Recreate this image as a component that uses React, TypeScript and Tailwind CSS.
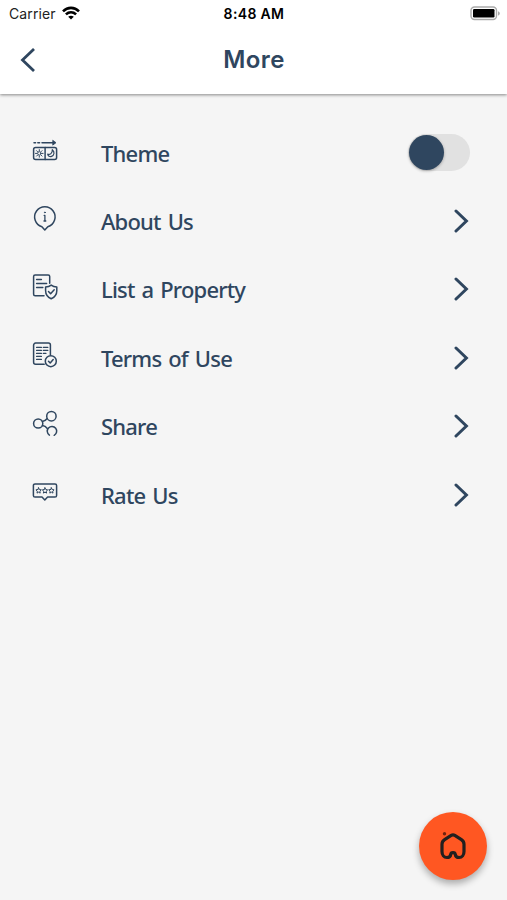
import React, { useState } from 'react';

interface MenuItem {
  id: string;
  label: string;
  icon: React.ReactNode;
}

const MENU_ITEMS: MenuItem[] = [
  {
    id: 'theme',
    label: 'Theme',
    icon: (
      <>
        <path d="M3 6.7h1.6M6.8 6.7h1.8M11 6.7h12" />
        <path d="M22 4.5l3 2.2-3 2.2z" fill="currentColor" strokeWidth="0.8" />
        <rect x="2.6" y="11.6" width="23" height="11.8" rx="2" />
        <path d="M14.1 11.6v11.8" />
        <circle cx="8.3" cy="17.4" r="1.7" strokeWidth="1" />
        <path d="M8.3 13.6v1.3M8.3 19.9v1.3M4.5 17.4h1.3M10.8 17.4h1.3M5.6 14.7l.9.9M10.1 19.2l.9.9M11 14.7l-.9.9M6.5 19.2l-.9.9" strokeWidth="1" />
        <path d="M21.3 13.7c2.7 2.1 2 5.7-.8 6.7-1.8.6-3.5-.5-3.8-2.2 2.2.9 4.9-1 4.6-4.5z" strokeWidth="1.2" />
      </>
    ),
  },
  {
    id: 'about',
    label: 'About Us',
    icon: (
      <>
        <path d="M10.9 21.7a10.2 10.2 0 1 1 5.9 0l-3 3.3z" />
        <circle cx="13.9" cy="7.4" r="0.5" fill="currentColor" strokeWidth="0.8" />
        <path d="M13.9 10.4v5.6M13.2 10.4h.7M13 16h1.8" strokeWidth="1.3" />
      </>
    ),
  },
  {
    id: 'list',
    label: 'List a Property',
    icon: (
      <>
        <path d="M13 22.7H4.1a1.5 1.5 0 0 1-1.5-1.5V3.4a1.5 1.5 0 0 1 1.5-1.5h13.1a1.5 1.5 0 0 1 1.5 1.5v6.8" />
        <path d="M5.6 6.4h4.8M5.6 10.4h10M5.6 14.5h6.2" />
        <path d="M20.2 12.1c1.7 1.3 3.5 1.8 5.6 1.9v3.7c0 3.8-2.4 6.6-5.6 8.1-3.2-1.5-5.6-4.3-5.6-8.1V14c2.1-.1 3.9-.6 5.6-1.9z" />
        <path d="M17.5 18.6l2.1 2.2 3.6-4" />
      </>
    ),
  },
  {
    id: 'terms',
    label: 'Terms of Use',
    icon: (
      <>
        <path d="M13.2 23.2H4.6a2 2 0 0 1-2-2V4.1a2 2 0 0 1 2-2h12.8a2 2 0 0 1 2 2v10" />
        <path d="M5.6 6.4h4.8M12.3 6.4h4.5M5.6 9.4h4.8M12.3 9.4h4.5M5.6 12.4h4.8M12.3 12.4h2.6M5.6 15.4h4.8M5.6 18.4h4.8" strokeWidth="1.3" />
        <circle cx="19.8" cy="20.2" r="5.5" />
        <path d="M17.5 20.3l1.7 1.7 3-3.4" />
      </>
    ),
  },
  {
    id: 'share',
    label: 'Share',
    icon: (
      <>
        <circle cx="7.2" cy="13.5" r="4.6" />
        <circle cx="20.4" cy="6.2" r="4.7" />
        <path d="M18.4 25.1a4.7 4.7 0 1 1 4.8.2" />
        <path d="M11.4 11.5c2.3-.4 3.6-1.4 4.8-3M11.4 15.6c2 .2 3.5 1 4.9 2.9" />
      </>
    ),
  },
  {
    id: 'rate',
    label: 'Rate Us',
    icon: (
      <>
        <path d="M4 5.9h20a1.6 1.6 0 0 1 1.6 1.6v9.9a1.6 1.6 0 0 1-1.6 1.6h-7.4l-2.8 3-2.8-3H4a1.6 1.6 0 0 1-1.6-1.6V7.5A1.6 1.6 0 0 1 4 5.9z" />
        {[7.6, 14, 20.4].map((x) => (
          <path
            key={x}
            d="M0-2.7l.8 1.7 1.9.3L1.3.7l.3 1.9L0 1.7l-1.6.9.3-1.9L-2.7-.7l1.9-.3z"
            transform={`translate(${x} 12.5)`}
            strokeWidth="1"
          />
        ))}
      </>
    ),
  },
];

const StatusBar = () => (
  <div className="grid h-7 grid-cols-3 items-center pr-1.5 pl-[9px] font-['Inter','Liberation_Sans',sans-serif] text-black">
    <div className="flex items-center gap-1.5">
      <span className="text-[14px] leading-7 tracking-[0.1px] text-[#222]">Carrier</span>
      <svg className="mb-0.5 h-[14px] w-[18px]" viewBox="0 0 18 14" fill="none" stroke="black" strokeWidth="2.6">
        <path d="M1 5.3c4.6-4.6 11.4-4.6 16 0" />
        <path d="M3.9 8.4c3-2.8 7.2-2.8 10.2 0" />
        <path d="M6.2 10.8c1.8-1.4 3.8-1.4 5.6 0L9 13.6z" fill="black" stroke="none" />
      </svg>
    </div>
    <span className="-ml-0.5 text-center text-[14px] leading-7 font-semibold tracking-[0.35px]">8:48 AM</span>
    <svg className="mb-0.5 h-[15px] w-[31px] justify-self-end" viewBox="0 0 31 15">
      <rect x="1" y="1" width="25.5" height="12.5" rx="3.5" fill="white" stroke="#aaa" strokeWidth="1.4" />
      <rect x="3" y="3" width="21.5" height="8.5" rx="1.2" fill="black" />
      <path d="M28 5.2c2.4.8 2.4 3.5 0 4.3z" fill="#aaa" />
    </svg>
  </div>
);

export default function App() {
  const [darkTheme, setDarkTheme] = useState(false);

  return (
    <div className="relative h-[900px] w-full overflow-hidden bg-[#f5f5f5] font-['Noto_Sans','Open_Sans',sans-serif] text-[#2f465f]">
      <header className="relative h-[94px] bg-white shadow-[0_1px_3px_rgba(0,0,0,0.45)]">
        <StatusBar />
        <div className="grid h-[64px] grid-cols-3 items-center px-5">
          <button aria-label="Back" className="w-4">
            <svg className="h-6 w-4" viewBox="0 0 16 24" fill="none" stroke="currentColor" strokeWidth="2.8">
              <path d="M14 1L2.5 12 14 23" />
            </svg>
          </button>
          <h1 className="pl-px text-center font-['Inter',sans-serif] text-[24px] leading-8 font-semibold tracking-[0.4px]">More</h1>
        </div>
      </header>

      <ul className="pt-[24.5px]">
        {MENU_ITEMS.map((item) => (
          <li key={item.id} className="flex h-[68.4px] items-center pr-[37px] pl-[31px]">
            <svg
              className="mb-[5px] h-7 w-7 shrink-0"
              viewBox="0 0 28 28"
              fill="none"
              stroke="currentColor"
              strokeWidth="1.5"
              strokeLinecap="round"
              strokeLinejoin="round"
            >
              {item.icon}
            </svg>
            <span className="ml-[42px] flex-1 text-[22px] leading-8 font-medium tracking-[-0.8px] [word-spacing:2px]">{item.label}</span>
            {item.id === 'theme' ? (
              <button
                role="switch"
                aria-label="Theme"
                aria-checked={darkTheme}
                onClick={() => setDarkTheme(!darkTheme)}
                className={`flex h-[37px] w-[62px] items-center rounded-full bg-[#e1e1e1] px-px ${darkTheme ? 'justify-end' : 'justify-start'}`}
              >
                <span className="h-[35px] w-[35px] rounded-full bg-[#2f465f] shadow-[0_1px_3px_rgba(0,0,0,0.3)]" />
              </button>
            ) : (
              <svg className="h-6 w-4" viewBox="0 0 16 24" fill="none" stroke="currentColor" strokeWidth="3" strokeLinecap="round">
                <path d="M2 2l10.4 10L2 22" />
              </svg>
            )}
          </li>
        ))}
      </ul>

      <button
        aria-label="Home"
        className="absolute right-[20px] bottom-[20px] flex h-[68px] w-[68px] items-center justify-center rounded-full bg-[#ff5722] shadow-[0_4px_7px_rgba(0,0,0,0.3)]"
      >
        <svg className="h-7 w-7" viewBox="0 0 28 28" fill="none" stroke="#21201f" strokeWidth="3.2" strokeLinecap="round" strokeLinejoin="round">
          <path d="M12.2 3.4L5.6 7.6Q3 9.3 3 12.2v7.2c0 3.6 2 6.1 4.9 6.1 2.3 0 3.6-1.3 3.8-3 .2-2.6 4.4-2.6 4.6 0 .2 1.7 1.5 3 3.8 3 2.9 0 4.9-2.5 4.9-6.1v-7.2q0-2.9-2.6-4.6l-6.6-4.2q-1.8-1.2-3.6 0z" />
          <circle cx="5.5" cy="1.7" r="1.7" fill="#6f2410" stroke="none" />
        </svg>
      </button>
    </div>
  );
}
